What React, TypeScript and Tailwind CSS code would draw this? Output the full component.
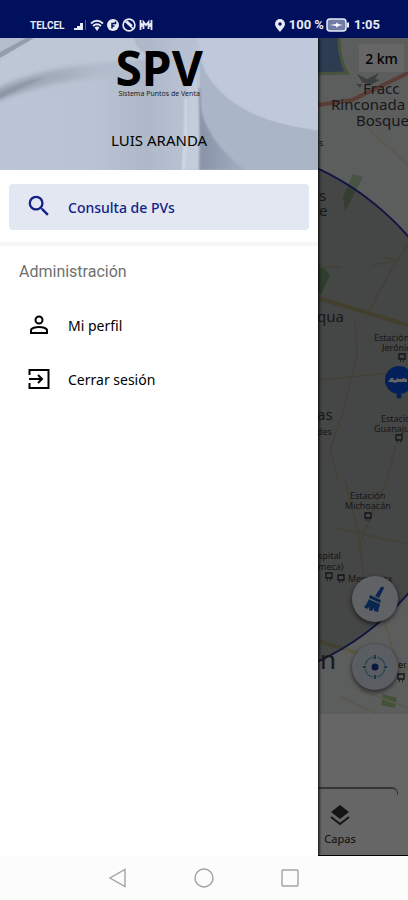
import React from "react";

const noto = "font-['Noto_Sans','Open_Sans',sans-serif]";
const roboto = "font-['Roboto','Noto_Sans',sans-serif]";

function StatusBar() {
  return (
    <header className={`flex h-[38px] shrink-0 items-end justify-between bg-[#00105c] pr-7 pb-1 pl-[30px] text-[#e8ebf5] ${roboto}`}>
      <div className="flex h-[18px] items-center gap-[3px]">
        <span className="mr-1.5 text-[10px] font-bold">TELCEL</span>
        <svg width="13" height="12" viewBox="0 0 13 12" fill="currentColor">
          <path d="M0 11h3V9H0zM3 11h3V7H3zM6 11h3V4H6z" />
          <path d="M11 11h1V1h-1z" opacity=".35" />
        </svg>
        <svg width="14" height="13" viewBox="0 0 14 13" fill="none" stroke="currentColor" strokeWidth="1.8">
          <path d="M1 4.500Q7-1 13 4.500M3 7Q7 3.500 11 7" />
          <path d="M4.500 8.500Q7 6.500 9.500 8.500L7 12z" fill="currentColor" stroke="none" />
        </svg>
        <svg width="12" height="12" viewBox="0 0 12 12">
          <circle cx="6" cy="6" r="6" fill="currentColor" />
          <path d="M5 9.500V4.500H8.500V2.500M5 7h2.500" stroke="#00105c" strokeWidth="1.500" fill="none" />
        </svg>
        <svg width="14" height="14" viewBox="0 0 13 13" fill="none" stroke="currentColor" strokeWidth="1.500">
          <circle cx="6.500" cy="6.500" r="5.500" />
          <path d="M2.800 3l7.500 7M4.500 2.800l5 4.500" />
        </svg>
        <svg width="14" height="12" viewBox="0 0 14 12" fill="none" stroke="currentColor" strokeWidth="1.800">
          <path d="M1.500 1v10M12.500 1v10M4.500 10V3L7 6l2.500-3v7M1 4l3 2-3 2M13 4l-3 2 3 2" />
        </svg>
      </div>
      <div className="flex h-[18px] items-center gap-0.5 text-[13px] font-bold">
        <svg width="10" height="13" viewBox="0 0 10 13">
          <path d="M5 0a5 5 0 0 1 5 5c0 3-3 5-5 8C3 10 0 8 0 5a5 5 0 0 1 5-5z" fill="currentColor" />
          <circle cx="5" cy="5" r="1.700" fill="#00105c" />
        </svg>
        <span className="ml-0.5">100 %</span>
        <svg width="24" height="14" viewBox="0 0 24 14">
          <rect x="1" y="1" width="19" height="12" rx="3" fill="#717ba5" stroke="currentColor" strokeWidth="1.500" />
          <path d="M22 4.500v5" stroke="currentColor" strokeWidth="2" />
          <path d="M4 7l6-1 1-2 1 2 5 1-5 1-1 2-1-2z" fill="#fff" />
        </svg>
        <span className="ml-0.5">1:05</span>
      </div>
    </header>
  );
}

function MapDrawing() {
  return (
    <svg className="absolute top-0 right-0" width="408" height="676" viewBox="0 38 408 676" aria-hidden="true">
      <rect y="38" width="408" height="676" fill="#e7e9e8" />
      <path d="M300 38h38q1 22 7 35l-45 1z" fill="#7097c9" />
      <path d="M339 38q0 20 8 35l-47 1" fill="none" stroke="#b3cf96" strokeWidth="3" />
      <path d="M353 174l10 3-18 35-2-15z" fill="#b4cfa8" />
      <path d="M318 262l12 13-9 20-3-5z" fill="#9bcf98" />
      <path d="M383 694l14 4-2 10-14-3z" fill="#a6cc88" />
      <path d="M318 105l34-5 56-27" fill="none" stroke="#e39a8b" strokeWidth="4" />
      <path d="M357 74l10 5 12-6-4 6 5 1-10 5-8-3zM356 84l6 0-2 4z" fill="#9a9c9e" />
      <g fill="none" stroke="#e1dec0" strokeWidth="2">
        <path d="M408 245l-20 30-23 45M318 380l90-9M355 320l2 35-15 60-12 35 8 30M345 480l13 52 8 60M335 528l73 16M396 445l-9 35-30 70" />
        <path d="M372 265l23-4M318 267h23M383 258l14 2M370 130l38 35" />
        <path d="M384 620l12 40 12 18M340 697l38 17M360 690l48 18" />
      </g>
      <path d="M318 298l90 27" fill="none" stroke="#dcd39a" strokeWidth="4" />
      <path d="M318 641l90 27" fill="none" stroke="#e0d9a8" strokeWidth="4" />
      <circle cx="203" cy="415" r="272" fill="#000" fillOpacity=".25" stroke="#2537a0" strokeWidth="2" />
      <g className={noto} fill="#3b3d40">
        <g fontSize="15">
          <text x="363" y="94">Fracc</text>
          <text x="331" y="110">Rinconada</text>
          <text x="356" y="126">Bosque</text>
          <text x="319" y="201">s</text>
          <text x="319" y="216">e</text>
          <text x="317" y="322">qua</text>
          <text x="317" y="420">as</text>
        </g>
        <text x="320" y="669" fontSize="26">n</text>
        <g fontSize="9">
          <text x="319" y="146">s</text>
          <text x="317" y="435">des</text>
          <text x="374" y="341">Estación</text>
          <text x="382" y="351">Jerónimo</text>
          <text x="381" y="422">Estación</text>
          <text x="374" y="432">Guanajuato</text>
          <text x="350" y="499">Estación</text>
          <text x="345" y="509">Michoacán</text>
          <text x="318" y="559">spital</text>
          <text x="318" y="570">meca)</text>
          <text x="348" y="582">Mercamex</text>
          <text x="398" y="668">er</text>
        </g>
      </g>
      <g fill="none" stroke="#303236" strokeWidth="1.300">
        {[[402, 357], [399, 438], [368, 516], [329, 576], [341, 578], [401, 677]].map(([x, y]) => (
          <path key={`${x}-${y}`} d={`M${x - 3} ${y - 3}h6v5h-6zM${x - 2} ${y + 4}h1M${x + 1} ${y + 4}h1`} />
        ))}
      </g>
      <circle cx="399" cy="380" r="14" fill="#0a52e0" />
      <path d="M388 382l3-4h3l-1 2h3l1-2 2 1h3l1-1 4 1v3h-10l-1 1-4-1z" fill="#fff" />
      <circle cx="399" cy="396" r="2.500" fill="#0a52e0" />
    </svg>
  );
}

function MapScreen() {
  return (
    <div className={`flex flex-1 flex-col bg-white ${noto}`}>
      <section className="relative flex-1 overflow-hidden" aria-label="Mapa">
        <MapDrawing />
        <span className="absolute top-1.5 right-1 flex h-7 w-[45px] items-center justify-center bg-white text-[14px] font-medium text-black">2 km</span>
        <div className="absolute right-2.5 bottom-6 flex flex-col gap-[22px]">
          <button aria-label="Limpiar" className="flex size-[46px] items-center justify-center rounded-full bg-[#f1f4fc] shadow-[0_2px_5px_#000000a0]">
            <svg width="24" height="28" viewBox="0 0 24 28" fill="#1762c4">
              <path d="M18 2q3-1 3 1l-5 10-4-2zM7 10l11 5-1 3-11-5zM5 14l12 5-2 8-4-1v-3l-2 3-3-1v-3l-2 2-3-2q3-3 5-8z" />
            </svg>
          </button>
          <button aria-label="Mi ubicación" className="flex size-[46px] items-center justify-center rounded-full bg-[#e2e8f5] shadow-[0_2px_5px_#000000a0]">
            <svg width="26" height="26" viewBox="0 0 26 26" fill="none">
              <circle cx="13" cy="13" r="10" stroke="#77b6c5" strokeWidth="1.500" strokeDasharray="11.700 4" strokeDashoffset="-2" />
              <path d="M13 1v4M13 21v4M1 13h3M22 13h3" stroke="#295b8c" strokeWidth="1.500" />
              <circle cx="13" cy="13" r="3.500" fill="#13439b" />
            </svg>
          </button>
        </div>
      </section>
      <div className="flex h-[142px] flex-col border-b border-black pt-[73px]">
        <div className="mr-2.5 h-2 rounded-tr-md border-t-2 border-r border-[#888]" />
        <button className="mr-[38px] flex w-[60px] flex-col items-center gap-1 self-end pt-2 text-[11px] text-[#222]">
          <svg width="22" height="24" viewBox="0 0 22 24" fill="#333">
            <path d="M11 2l9 7-9 7-9-7z" />
            <path d="M2 14l9 7 9-7" fill="none" stroke="#333" strokeWidth="2" />
          </svg>
          <span>Capas</span>
        </button>
      </div>
    </div>
  );
}

function DrawerHeader() {
  return (
    <div className="relative flex h-[132px] flex-col items-center overflow-hidden bg-[#bdc6d7]">
      <svg className="absolute inset-0 size-full" viewBox="0 0 318 132" preserveAspectRatio="none" aria-hidden="true">
        <defs>
          <linearGradient id="base" x1="0" x2="1" y1="0" y2="0">
            <stop offset="0" stopColor="#bcc5d6" />
            <stop offset=".3" stopColor="#bac3d3" />
            <stop offset=".46" stopColor="#afb8c8" />
            <stop offset=".56" stopColor="#b6c0d1" />
            <stop offset="1" stopColor="#c0cadc" />
          </linearGradient>
          <linearGradient id="wave" x1="0" x2="1" y1="0" y2="0">
            <stop offset="0" stopColor="#949dac" />
            <stop offset=".5" stopColor="#a7b0bf" />
            <stop offset="1" stopColor="#b5bece" stopOpacity="0" />
          </linearGradient>
          <linearGradient id="fold" x1="0" x2="1" y1="0" y2="0">
            <stop offset="0" stopColor="#8893a6" />
            <stop offset="1" stopColor="#a4afc3" />
          </linearGradient>
          <filter id="soft"><feGaussianBlur stdDeviation="2.500" /></filter>
          <filter id="edge"><feGaussianBlur stdDeviation="1" /></filter>
        </defs>
        <rect width="318" height="132" fill="url(#base)" />
        <path d="M36 0h99q4 14 25 22Q80 20 0 48V24z" fill="#bec7d5" filter="url(#edge)" />
        <path d="M0 0h27L0 14z" fill="#b4bdcb" />
        <path d="M0 14L26 0h8L0 20z" fill="#949dab" />
        <path d="M-5 52Q50 24 140 24V40Q60 36-5 64z" fill="url(#wave)" filter="url(#soft)" />
        <path d="M-2 57Q20 44 45 39Q22 49-2 61z" fill="#8c95a5" filter="url(#edge)" />
        <path d="M135 0q4 14 24 22" stroke="#a9b2c2" strokeWidth="2" fill="none" filter="url(#edge)" />
        <path d="M200 22Q222 82 318 92V132H200z" fill="#abb5c8" />
        <path d="M197 0H318V92Q228 78 204 30z" fill="#c0c9db" filter="url(#edge)" />
        <path d="M200 70Q210 108 246 132H200z" fill="url(#fold)" filter="url(#edge)" />
        <path d="M188 30h8q4 50 3 102h-18q8-60 7-102z" fill="#c3ccda" filter="url(#edge)" />
        <path d="M186 60q0 40-3 72" stroke="#d0d9e3" strokeWidth="3" fill="none" filter="url(#edge)" />
        <path d="M199 50q3 40 1 82" stroke="#8b96a9" strokeWidth="2" fill="none" filter="url(#edge)" />
      </svg>
      <h1 className="relative mt-2 text-[48px] leading-[44px] font-bold text-black">SPV</h1>
      <p className="relative text-[7px] leading-[8px] text-[#222]">Sistema Puntos de Venta</p>
      <p className="relative mt-8 text-[15px] leading-5 text-black">LUIS ARANDA</p>
    </div>
  );
}

function Drawer() {
  return (
    <aside className={`absolute inset-y-0 left-0 w-[78%] bg-white shadow-[1px_0_3px_#000] ${noto}`}>
      <DrawerHeader />
      <nav className="text-[14px] text-black">
        <div className="border-b-4 border-[#f7f7f7] px-[9px] pt-3.5 pb-3">
          <a href="#consulta" className="flex h-[46px] items-center gap-[17px] rounded bg-[#e2e7f2] pl-[18px] font-medium text-[#142287]">
            <svg width="24" height="24" viewBox="0 0 24 24" fill="currentColor">
              <path d="M15.500 14h-.790l-.280-.270A6.470 6.470 0 0 0 16 9.500 6.500 6.500 0 1 0 9.500 16c1.610 0 3.090-.590 4.230-1.570l.270.280v.790l5 4.990L20.490 19zm-6 0a4.500 4.500 0 1 1 0-9 4.500 4.500 0 0 1 0 9z" transform="translate(-1.800 -2.800) scale(1.150)" />
            </svg>
            Consulta de PVs
          </a>
        </div>
        <h2 className={`px-[19px] py-4 text-[16px] leading-5 font-normal text-[#707070] ${roboto}`}>Administración</h2>
        <a href="#perfil" className="flex h-[54px] items-center gap-[17px] pl-[27px]">
          <svg width="24" height="24" viewBox="0 0 24 24" fill="none" stroke="currentColor" strokeWidth="2">
            <circle cx="12" cy="7" r="3.500" />
            <path d="M4 20v-2.500C4 15 9 14 12 14s8 1 8 3.500V20z" />
          </svg>
          Mi perfil
        </a>
        <a href="#salir" className="flex h-[54px] items-center gap-[17px] pl-[27px]">
          <svg width="24" height="24" viewBox="0 0 24 24" fill="none" stroke="currentColor" strokeWidth="2">
            <path d="M2.500 8V3h19v18h-19v-5M2 12h13M11 8l4 4-4 4" />
          </svg>
          Cerrar sesión
        </a>
      </nav>
    </aside>
  );
}

function SystemNav() {
  return (
    <footer className="flex h-11 shrink-0 items-center justify-center gap-[66px] bg-[#fcfcfc] text-[#a3a3a3]">
      <button aria-label="Atrás">
        <svg width="20" height="20" viewBox="0 0 20 20" fill="none" stroke="currentColor" strokeWidth="1.400"><path d="M17 1.500v17L2 10z" /></svg>
      </button>
      <button aria-label="Inicio">
        <svg width="20" height="20" viewBox="0 0 20 20" fill="none" stroke="currentColor" strokeWidth="1.400"><circle cx="10" cy="10" r="9" /></svg>
      </button>
      <button aria-label="Recientes">
        <svg width="20" height="20" viewBox="0 0 20 20" fill="none" stroke="currentColor" strokeWidth="1.400"><rect x="2" y="2" width="16" height="16" rx="1" /></svg>
      </button>
    </footer>
  );
}

export default function App() {
  return (
    <div className="flex min-h-screen flex-col bg-white">
      <StatusBar />
      <main className="relative flex flex-1 flex-col overflow-hidden">
        <MapScreen />
        <div className="absolute inset-0 bg-black/60" />
        <Drawer />
      </main>
      <SystemNav />
    </div>
  );
}
